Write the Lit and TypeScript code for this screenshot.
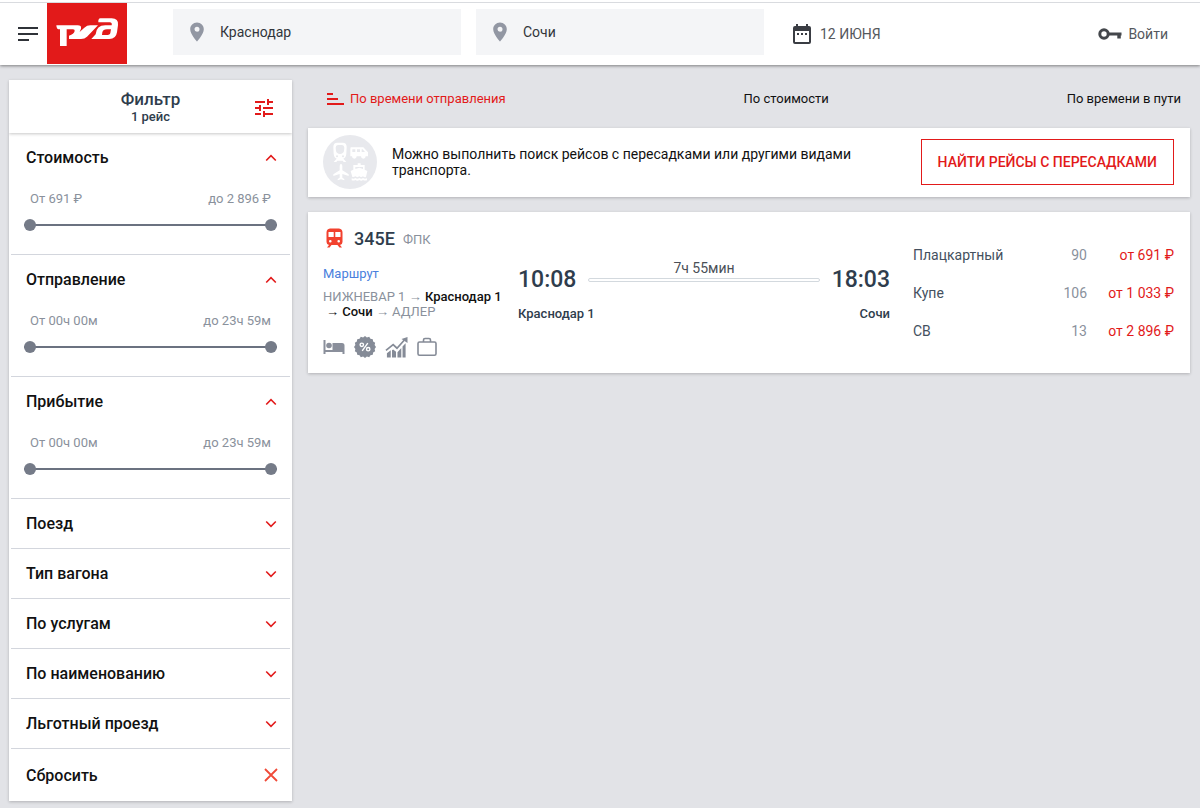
import { LitElement, html, css, svg, nothing } from "lit";
import { customElement, property, state } from "lit/decorators.js";

interface RangeSection {
  title: string;
  from: string;
  to: string;
}

const ranges: RangeSection[] = [
  { title: "Стоимость", from: "От 691 ₽", to: "до 2 896 ₽" },
  { title: "Отправление", from: "От 00ч 00м", to: "до 23ч 59м" },
  { title: "Прибытие", from: "От 00ч 00м", to: "до 23ч 59м" },
];

const closedSections = ["Поезд", "Тип вагона", "По услугам", "По наименованию", "Льготный проезд"];

const fares = [
  { name: "Плацкартный", seats: "90", price: "от 691 ₽" },
  { name: "Купе", seats: "106", price: "от 1 033 ₽" },
  { name: "СВ", seats: "13", price: "от 2 896 ₽" },
];

const reset = css`
  * {
    box-sizing: border-box;
  }
  button,
  input {
    font: inherit;
    color: inherit;
    margin: 0;
    padding: 0;
    border: 0;
    background: none;
  }
  button {
    cursor: pointer;
  }
  a {
    color: inherit;
    text-decoration: none;
  }
  svg {
    display: block;
    flex: none;
  }
  .card {
    background: #fff;
    box-shadow: 0 1px 3px rgba(0, 0, 0, 0.22);
  }
`;

@customElement("site-header")
export class SiteHeader extends LitElement {
  static styles = [
    reset,
    css`
      :host {
        display: block;
      }
      .bar {
        display: flex;
        align-items: center;
        height: 65px;
        padding: 3px 32px 1px 0;
        background: linear-gradient(#fff 2px, #d9dbdf 2px, #d9dbdf 3px, #fff 3px);
        box-shadow: 0 1px 3px rgba(0, 0, 0, 0.45);
      }
      .menu {
        display: flex;
        justify-content: flex-end;
        width: 47px;
        padding-right: 9px;
      }
      .route {
        display: flex;
        flex: 0 1 591px;
        gap: 15px;
        margin-left: 46px;
        padding-bottom: 3px;
      }
      .field {
        display: flex;
        align-items: center;
        flex: 1;
        min-width: 0;
        height: 46px;
        padding: 0 16px;
        gap: 15px;
        background: #f4f5f7;
      }
      .field input {
        width: 100%;
        min-width: 0;
        font-size: 14px;
        color: #32353b;
        outline: 0;
      }
      .date,
      .login {
        display: flex;
        align-items: center;
        font-size: 14px;
        color: #55585d;
      }
      .date {
        margin-left: 29px;
        gap: 9px;
      }
      .login {
        margin-left: auto;
        gap: 6px;
      }
    `,
  ];

  private field(label: string, value: string) {
    return html`<label class="field">
      <svg width="16" height="20" viewBox="0 0 16 20" aria-hidden="true">
        <path fill="#9297a3" fill-rule="evenodd"
          d="M8 0.5C4.2 0.5 1.2 3.5 1.2 7.2 1.2 12.200 8 19.500 8 19.500S14.800 12.200 14.800 7.200C14.800 3.500 11.800 0.500 8 0.500ZM8 4.700a2.500 2.500 0 1 1 0 5 2.500 2.500 0 0 1 0-5Z" />
      </svg>
      <input type="text" aria-label=${label} .value=${value} />
    </label>`;
  }

  render() {
    return html`<header class="bar">
      <button class="menu" aria-label="Меню">
        <svg width="20" height="16" viewBox="0 0 20 16" stroke="#2f3238" stroke-width="2">
          <path d="M0 2h20M0 8h20M0 14h11" />
        </svg>
      </button>
      <a href="#" aria-label="РЖД">
        <svg width="80" height="61" viewBox="0 0 240 183">
          <path fill="#e21a1a" d="M0 0h240v183H0z" />
          <path fill="#fff"
            d="M28 67H92Q104 67 102 77Q100 86 92 92L112 74Q120 67 130 67H153L120 101Q113 108 102 108H66V98Q81 93 83 84Q84 79 78 79H59V129H39V79H34Q29 78 28 67Z" />
          <path fill="#fff" fill-rule="evenodd"
            d="M160 46H194Q215 46 213 66L210 88Q207 108 187 108H133L146 94Q148 67 175 67H194Q196 58 188 58H154Q153 47 160 46ZM180 79Q168 79 166 88L165 96H178Q189 96 190 90L192 79Z" />
        </svg>
      </a>
      <div class="route">${this.field("Откуда", "Краснодар")}${this.field("Куда", "Сочи")}</div>
      <button class="date">
        <svg width="18" height="20" viewBox="0 0 18 20" aria-hidden="true">
          <path fill="#3a3d43" fill-rule="evenodd"
            d="M3 0h2v2h8V0h2v2h1a2 2 0 0 1 2 2v14a2 2 0 0 1-2 2H2a2 2 0 0 1-2-2V4a2 2 0 0 1 2-2h1ZM2 7v11h14V7ZM4 9h2v2H4ZM8 9h2v2H8ZM12 9h2v2h-2Z" />
        </svg>
        12 ИЮНЯ
      </button>
      <a class="login" href="#">
        <svg width="24" height="14" viewBox="0 0 24 14" aria-hidden="true">
          <circle cx="6" cy="7" r="4.200" fill="none" stroke="#44474c" stroke-width="3" />
          <path fill="#44474c" d="M11 5.500h12.500V8.500H22.800v3h-3.500v-3H11Z" />
        </svg>
        Войти
      </a>
    </header>`;
  }
}

@customElement("filter-section")
export class FilterSection extends LitElement {
  @property() heading = "";
  @property() from = "";
  @property() to = "";
  @property({ type: Boolean }) open = false;

  static styles = [
    reset,
    css`
      :host {
        display: block;
        border-bottom: 1px solid #d3d6dd;
      }
      .heading {
        display: flex;
        align-items: center;
        justify-content: space-between;
        width: 100%;
        height: 49px;
        padding: 0 13px 0 15px;
        font-size: 16px;
        font-weight: 500;
        color: #111;
        text-align: left;
      }
      .body {
        height: 72px;
        padding: 8px 13px 0;
      }
      .labels {
        display: flex;
        justify-content: space-between;
        padding: 0 6px;
        font-size: 13px;
        line-height: 18px;
        color: #8a919c;
      }
      .slider {
        display: grid;
        align-items: center;
        height: 12px;
        margin-top: 11px;
        background: linear-gradient(#6b7280, #6b7280) center / 100% 2px no-repeat;
      }
      .slider input {
        grid-area: 1 / 1;
        appearance: none;
        width: 100%;
        height: 12px;
        pointer-events: none;
      }
      .slider input::-webkit-slider-thumb {
        appearance: none;
        width: 12px;
        height: 12px;
        border-radius: 50%;
        background: #757b88;
        pointer-events: auto;
      }
    `,
  ];

  render() {
    return html`
      <button class="heading" aria-expanded=${this.open} @click=${() => (this.open = !this.open)}>
        ${this.heading}
        <svg width="12" height="8" viewBox="0 0 12 8" fill="none" stroke="#e21a1a" stroke-width="1.600">
          <path d=${this.open ? "M1.200 6.500 6 1.700l4.800 4.800" : "M1.200 1.500 6 6.300l4.800-4.800"} />
        </svg>
      </button>
      ${this.open
        ? html`<div class="body">
            <div class="labels"><span>${this.from}</span><span>${this.to}</span></div>
            <div class="slider">
              <input type="range" min="0" max="100" .value=${"0"} aria-label="${this.heading}: от" />
              <input type="range" min="0" max="100" .value=${"100"} aria-label="${this.heading}: до" />
            </div>
          </div>`
        : nothing}
    `;
  }
}

@customElement("filter-panel")
export class FilterPanel extends LitElement {
  static styles = [
    reset,
    css`
      :host {
        display: block;
      }
      .head {
        position: relative;
        display: grid;
        grid-template-columns: 1fr auto 1fr;
        align-items: center;
        height: 53px;
        padding: 0 19px;
        color: #2f3d4d;
        font-weight: 500;
        text-align: center;
      }
      .title {
        grid-column: 2;
        margin: 0;
        font-size: 17px;
        line-height: 20px;
        font-weight: 500;
      }
      .count {
        font-size: 13px;
        line-height: 16px;
        font-weight: 500;
      }
      .tune {
        justify-self: end;
        padding-top: 3px;
      }
      .list {
        padding: 0 2px;
      }
      .clear {
        display: flex;
        align-items: center;
        justify-content: space-between;
        width: 100%;
        height: 52px;
        padding: 0 12px 0 15px;
        font-size: 16px;
        font-weight: 500;
        color: #111;
      }
    `,
  ];

  render() {
    return html`
      <div class="head card">
        <h2 class="title">Фильтр<div class="count">1 рейс</div></h2>
        <button class="tune" aria-label="Настроить фильтр">
          <svg width="18" height="18" viewBox="0 0 18 18" fill="#e21a1a">
            <path d="M0 14v2h6v-2ZM0 2v2h10V2ZM10 18v-2h8v-2h-8v-2H8v6ZM4 6v2H0v2h4v2h2V6ZM18 10V8H8v2ZM12 6h2V4h4V2h-4V0h-2Z" />
          </svg>
        </button>
      </div>
      <div class="list card">
        ${ranges.map(
          (r) => html`<filter-section open .heading=${r.title} .from=${r.from} .to=${r.to}></filter-section>`
        )}
        ${closedSections.map((t) => html`<filter-section .heading=${t}></filter-section>`)}
        <button class="clear">
          Сбросить
          <svg width="14" height="14" viewBox="0 0 14 14" stroke="#f04a38" stroke-width="1.800">
            <path d="M1 1l12 12M13 1 1 13" />
          </svg>
        </button>
      </div>
    `;
  }
}

@customElement("transfer-banner")
export class TransferBanner extends LitElement {
  static styles = [
    reset,
    css`
      :host {
        display: block;
      }
      .banner {
        display: flex;
        align-items: center;
        min-height: 69px;
        padding: 0 16px 2px 15px;
        gap: 15px;
      }
      .text {
        flex: 0 1 470px;
        margin: 0;
        font-size: 14px;
        line-height: 16px;
        color: #111;
      }
      .find {
        height: 46px;
        margin-left: auto;
        padding: 0 16px;
        border: 1px solid #e21a1a;
        font-size: 14px;
        font-weight: 500;
        color: #e21a1a;
        white-space: nowrap;
      }
    `,
  ];

  render() {
    return html`<section class="banner card">
      <svg width="54" height="54" viewBox="0 0 162 162" aria-hidden="true">
        <circle cx="81" cy="81" r="81" fill="#e8e9ed" />
        <path fill="#fff" fill-rule="evenodd"
          d="M43 23h16q12 0 12 13l-1 20q-1 12-9 15l9 10h-8l-3-4H43l-3 4h-8l9-10q-8-3-9-15l-1-20q0-13 12-13ZM45 30q-7 1-7 8l1 10q2 8 12 9 10-1 12-9l1-10q0-7-7-8Z" />
        <circle cx="42" cy="64" r="3" fill="#e8e9ed" />
        <circle cx="60" cy="64" r="3" fill="#e8e9ed" />
        <path fill="#fff" fill-rule="evenodd"
          d="M83 37h38l14 15v12h-7a7 7 0 0 1-14 0h-13a7 7 0 0 1-14 0h-5V41ZM88 43v8h9v-8ZM102 43v8h9v-8ZM116 43v8h10l-7-8Z" />
        <path fill="#fff"
          d="M54 87q4 0 4 7v12l19 12v5l-19-6v11l6 4v4l-10-3-10 3v-4l6-4v-11l-19 6v-5l19-12V94q0-7 4-7Z" />
        <path fill="#fff"
          d="M104 85h9v5h12v14l8 4-4 18q-5 2-9-2-6 5-11 0-6 5-12 0-4 3-9 2l-5-18 8-4V90h13ZM97 96v6l12-4 11 4v-6ZM86 130q6 3 11-1 6 4 12 0 6 4 11 0 5 4 12 1v6q-7 2-12-1-5 4-11 0-6 4-12 0-5 3-11 1Z" fill-rule="evenodd" />
      </svg>
      <p class="text">Можно выполнить поиск рейсов с пересадками или другими видами транспорта.</p>
      <button class="find">НАЙТИ РЕЙСЫ С ПЕРЕСАДКАМИ</button>
    </section>`;
  }
}

const badge = (() => {
  const pts: string[] = [];
  for (let i = 0; i < 32; i++) {
    const r = i % 2 ? 9.8 : 11;
    const a = (i * Math.PI) / 16;
    pts.push(`${(11 + r * Math.cos(a)).toFixed(2)},${(11 + r * Math.sin(a)).toFixed(2)}`);
  }
  return pts.join(" ");
})();

@customElement("train-card")
export class TrainCard extends LitElement {
  static styles = [
    reset,
    css`
      :host {
        display: block;
      }
      .train {
        display: grid;
        grid-template-columns: 195px minmax(0, 1fr) 261px;
        padding: 15px 16px 15px 15px;
      }
      .name {
        display: flex;
        align-items: center;
        height: 22px;
        padding-left: 3px;
        gap: 11px;
      }
      .number {
        margin: 0;
        font-size: 18px;
        font-weight: 500;
        color: #2f3d4d;
      }
      .carrier {
        margin-left: -3px;
        padding-top: 3px;
        font-size: 13px;
        color: #8a919c;
      }
      .link {
        display: block;
        margin-top: 17px;
        font-size: 13px;
        line-height: 16px;
        color: #4a7fdd;
      }
      .path {
        margin: 7px 0 0;
        font-size: 13px;
        line-height: 15px;
        color: #8a919c;
      }
      .path b {
        font-weight: 500;
        color: #111;
      }
      .next {
        padding-left: 3px;
      }
      .services {
        display: flex;
        align-items: center;
        gap: 9px;
        height: 22px;
        margin-top: 17px;
      }
      .trip {
        display: grid;
        grid-template-columns: auto 1fr auto;
        align-content: start;
        padding: 28px 23px 0 0;
        color: #2f3d4d;
      }
      .time {
        font-size: 23px;
        line-height: 50px;
        font-weight: 500;
      }
      .leg {
        margin: 5px 12px 0;
        font-size: 14px;
        line-height: 17px;
        text-align: center;
        color: #4a4f57;
      }
      .track {
        height: 4px;
        margin-top: 1px;
        border: 1px solid #d3d9de;
        border-radius: 2px;
      }
      .stations {
        grid-column: 1 / -1;
        display: flex;
        justify-content: space-between;
        font-size: 13px;
        line-height: 18px;
        font-weight: 500;
      }
      .fares {
        width: 100%;
        margin-top: 9px;
        border-collapse: collapse;
        align-self: start;
        font-size: 14px;
        color: #44505e;
      }
      .fares th,
      .fares td {
        height: 38px;
        padding: 0;
        font-weight: 400;
        text-align: left;
      }
      .fares .seats {
        text-align: right;
        color: #8a919c;
      }
      .fares .price {
        width: 87px;
        text-align: right;
        color: #e21a1a;
      }
    `,
  ];

  render() {
    return html`<article class="train card">
      <div>
        <div class="name">
          <svg width="17" height="20" viewBox="0 0 17 20" aria-hidden="true">
            <path fill="#f2412e" fill-rule="evenodd"
              d="M4 0.500h9q3.500 0.500 3.500 4V14q0 2.500-2.500 3l2 2.500h-2.600L11.500 17h-6l-1.900 2.500H1L3 17Q0.500 16.500 0.500 14V4.500q0-3.500 3.500-4ZM2.500 4v5h5.200V4ZM9.300 4v5h5.200V4ZM4.300 12a1.300 1.300 0 1 0 0 2.600 1.300 1.300 0 0 0 0-2.600ZM12.700 12a1.300 1.300 0 1 0 0 2.600 1.300 1.300 0 0 0 0-2.600Z" />
          </svg>
          <h3 class="number">345Е</h3>
          <span class="carrier">ФПК</span>
        </div>
        <a class="link" href="#">Маршрут</a>
        <p class="path">НИЖНЕВАР 1 → <b>Краснодар 1 <span class="next">→ Сочи</span></b> → АДЛЕР</p>
        <div class="services">
          <svg width="22" height="16" viewBox="0 0 22 16" fill="#8a8f9b" role="img" aria-label="Постельное бельё">
            <path d="M0.500 1h2v10h7V4H19q2.500 0 2.500 2.500V15h-2v-2H2.500v2h-2Z" />
            <circle cx="6" cy="6.500" r="2.800" />
          </svg>
          <svg width="22" height="22" viewBox="0 0 22 22" role="img" aria-label="Скидки">
            <polygon points=${badge} fill="#858b97" />
            <g fill="none" stroke="#fff" stroke-width="1.400">
              <circle cx="7.800" cy="8.800" r="1.700" />
              <circle cx="14.200" cy="13.200" r="1.700" />
              <path d="M13.800 7.200 8.200 14.800" />
            </g>
          </svg>
          <svg width="23" height="22" viewBox="0 0 24 22" fill="#858b97" role="img" aria-label="Динамическая цена">
            <path d="M2 17.500l4-3V22H2ZM7.300 14.500l1.200-1 3 2.500V22H7.300ZM13 16.500l4-4.500v10h-4ZM18.300 10.500l3.200-3.500V22h-3.200Z" />
            <path d="M1 14.500 8.500 8.500l4 3.800L20 4" fill="none" stroke="#858b97" stroke-width="1.800" />
            <path d="M23.500 0.500v6.300L17.200 2.600Z" />
          </svg>
          <svg width="20" height="20" viewBox="0 0 20 20" fill="none" stroke="#858b97" stroke-width="1.600" role="img" aria-label="Багаж">
            <rect x="1" y="5" width="18" height="13.200" rx="1.500" />
            <path d="M6.500 5V3q0-1.500 1.500-1.500h4q1.500 0 1.500 1.500v2" />
          </svg>
        </div>
      </div>
      <div class="trip">
        <time class="time">10:08</time>
        <div class="leg">7ч 55мин<div class="track"></div></div>
        <time class="time">18:03</time>
        <div class="stations"><span>Краснодар 1</span><span>Сочи</span></div>
      </div>
      <table class="fares">
        <tbody>
          ${fares.map(
            (f) => html`<tr>
              <th scope="row">${f.name}</th>
              <td class="seats">${f.seats}</td>
              <td class="price">${f.price}</td>
            </tr>`
          )}
        </tbody>
      </table>
    </article>`;
  }
}

@customElement("app-root")
export class AppRoot extends LitElement {
  @state() private sort = 0;

  static styles = [
    reset,
    css`
      :host {
        display: block;
        min-height: 100vh;
        background: #e2e3e7;
        font-family: Roboto, "Liberation Sans", sans-serif;
        font-size: 14px;
      }
      .page {
        display: grid;
        grid-template-columns: 283px minmax(0, 1fr);
        align-items: start;
        gap: 16px;
        padding: 15px 10px 7px 9px;
      }
      .results {
        display: grid;
        gap: 15px;
      }
      .sort {
        display: flex;
        justify-content: space-between;
        height: 33px;
        padding: 9px 9px 0 19px;
        font-size: 13px;
        line-height: 20px;
        color: #111;
      }
      .sort button {
        display: flex;
        align-items: center;
        gap: 6px;
        height: 20px;
      }
      .sort .active {
        color: #e21a1a;
      }
    `,
  ];

  private sortIcon() {
    return svg`<svg width="17" height="12" viewBox="0 0 17 12" fill="#e21a1a" aria-hidden="true">
      <path d="M0 0h6v2H0zM0 5h11v2H0zM0 10h17v2H0z" />
    </svg>`;
  }

  render() {
    const modes = ["По времени отправления", "По стоимости", "По времени в пути"];
    return html`
      <site-header></site-header>
      <div class="page">
        <filter-panel></filter-panel>
        <main class="results">
          <nav class="sort">
            ${modes.map(
              (m, i) => html`<button class=${i === this.sort ? "active" : ""} @click=${() => (this.sort = i)}>
                ${i === this.sort ? this.sortIcon() : nothing}${m}
              </button>`
            )}
          </nav>
          <transfer-banner></transfer-banner>
          <train-card></train-card>
        </main>
      </div>
    `;
  }
}
